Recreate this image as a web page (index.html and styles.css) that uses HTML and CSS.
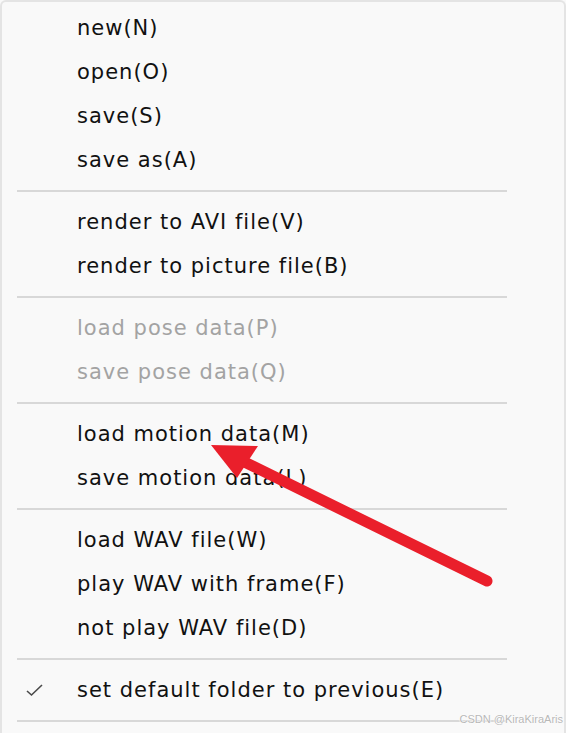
FILE: index.html
```html
<!DOCTYPE html>
<html>
<head>
<meta charset="utf-8">
<link rel="stylesheet" href="styles.css">
</head>
<body>
<div class="menu">
  <div class="item">new(N)</div>
  <div class="item">open(O)</div>
  <div class="item">save(S)</div>
  <div class="item">save as(A)</div>
  <div class="sep"></div>
  <div class="item">render to AVI file(V)</div>
  <div class="item">render to picture file(B)</div>
  <div class="sep"></div>
  <div class="item disabled">load pose data(P)</div>
  <div class="item disabled">save pose data(Q)</div>
  <div class="sep"></div>
  <div class="item">load motion data(M)</div>
  <div class="item">save motion data(L)</div>
  <div class="sep"></div>
  <div class="item">load WAV file(W)</div>
  <div class="item">play WAV with frame(F)</div>
  <div class="item">not play WAV file(D)</div>
  <div class="sep"></div>
  <div class="item checked">
    <svg class="check" width="20" height="16" viewBox="0 0 20 16"><path d="M2 9 L6.5 13 L17 3" fill="none" stroke="#4a4a4a" stroke-width="1.6"/></svg>
    set default folder to previous(E)
  </div>
  <div class="sep"></div>
</div>
<svg class="arrow" width="566" height="733" viewBox="0 0 566 733">
  <line x1="487" y1="581" x2="228" y2="454" stroke="#ea1f2b" stroke-width="11" stroke-linecap="round"/>
  <polygon points="211,445 258,446 237,478" fill="#ea1f2b"/>
</svg>
<div class="watermark">CSDN @KiraKiraAris</div>
</body>
</html>
```

FILE: styles.css
```css
html, body {
  margin: 0;
  padding: 0;
  background: #f9f9f9;
}
body {
  width: 566px;
  height: 733px;
  overflow: hidden;
  position: relative;
}
.menu {
  box-sizing: border-box;
  width: 566px;
  height: 733px;
  background: #f9f9f9;
  border: 2px solid #e4e4e4;
  border-bottom: none;
  border-radius: 6px 6px 0 0;
  padding-top: 4px;
  font-family: "DejaVu Sans", sans-serif;
  font-size: 21px;
  letter-spacing: 1px;
  color: #111;
}
.item {
  height: 44px;
  display: flex;
  align-items: center;
  padding-left: 75px;
  position: relative;
  white-space: nowrap;
}
.item.disabled {
  color: #a3a3a3;
}
.check {
  position: absolute;
  left: 23px;
  top: 14px;
}
.sep {
  height: 2px;
  margin: 8px 0 8px 15px;
  width: 490px;
  background: #d8d8d8;
}
.arrow {
  position: absolute;
  left: 0;
  top: 0;
  pointer-events: none;
}
.watermark {
  position: absolute;
  right: 3px;
  top: 713px;
  font-family: "Liberation Sans", sans-serif;
  font-size: 11px;
  color: #b8b8b8;
  text-shadow: 0 0 2px #fff, 0 0 2px #fff, 0 0 1px #fff;
}
```
